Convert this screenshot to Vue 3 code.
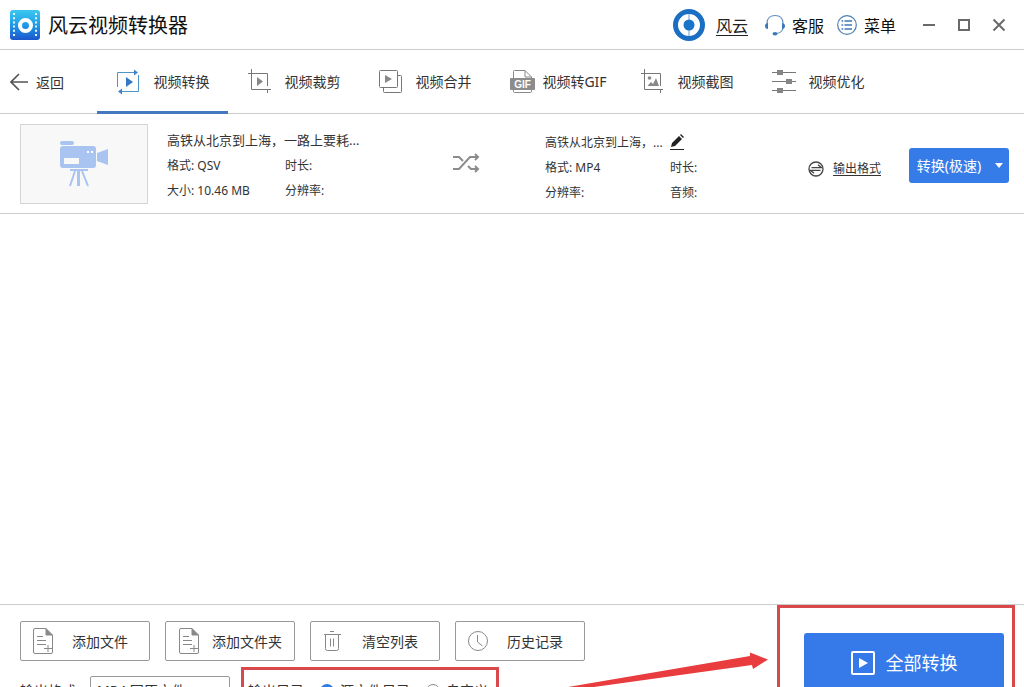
<script setup>
import { ref } from 'vue'

const tabs = [
  { id: 'convert', label: '视频转换' },
  { id: 'crop', label: '视频裁剪' },
  { id: 'merge', label: '视频合并' },
  { id: 'gif', label: '视频转GIF' },
  { id: 'shot', label: '视频截图' },
  { id: 'tune', label: '视频优化' },
]
const activeTab = ref('convert')

const actions = [
  { id: 'file', label: '添加文件' },
  { id: 'folder', label: '添加文件夹' },
  { id: 'clear', label: '清空列表' },
  { id: 'history', label: '历史记录' },
]
const format = ref('mp4')
const outputDir = ref('source')
</script>

<template>
  <div class="app">
    <header class="titlebar">
      <svg class="logo" width="30" height="30" viewBox="0 0 30 30" aria-hidden="true">
        <defs>
          <linearGradient id="logoFill" x1="0" y1="0" x2="0" y2="1">
            <stop offset="0" stop-color="#3cc9ee" />
            <stop offset="0.5" stop-color="#1f9be8" />
            <stop offset="1" stop-color="#1d55cc" />
          </linearGradient>
        </defs>
        <rect width="30" height="30" rx="3" fill="url(#logoFill)" />
        <path d="M4 3v25M26 3v25" stroke="#e8f8ff" stroke-width="2" stroke-dasharray="2 2.2" />
        <circle cx="15.5" cy="15.5" r="5.500" fill="none" stroke="#fff" stroke-width="4" />
      </svg>
      <h1>风云视频转换器</h1>

      <div class="account">
        <svg width="32" height="32" viewBox="0 0 32 32" aria-hidden="true">
          <circle cx="16" cy="16" r="13.500" fill="#fff" stroke="#1b6fc2" stroke-width="5" />
          <path d="M16 5v22" stroke="#6fa6d8" stroke-width="1" />
          <circle cx="16" cy="16" r="5.500" fill="#1b74cc" />
        </svg>
        <a href="#" class="user">风云</a>
      </div>
      <button class="tool service" type="button">
        <svg width="20" height="22" viewBox="0 0 20 22" fill="none" aria-hidden="true">
          <path d="M2 9.500C2 4 5.500 1.500 10 1.500S18 4 18 9.500M18 14c-.6 3-3 5-6.500 5.500" stroke="#5f8fc0" stroke-width="1.200" />
          <path d="M3 9v6C1.200 15 0 13.800 0 12s1.200-3 3-3zM17 9v6c1.800 0 3-1.200 3-3s-1.200-3-3-3z" fill="#3c78b8" />
          <ellipse cx="10" cy="19.700" rx="2.500" ry="1.700" fill="#3c78b8" />
        </svg>
        <span>客服</span>
      </button>
      <button class="tool" type="button">
        <svg width="20" height="20" viewBox="0 0 20 20" fill="none" aria-hidden="true">
          <circle cx="10" cy="10" r="9.300" stroke="#4c7fb4" stroke-width="1.200" />
          <path d="M7.500 6h7.500M7.500 10h7.500M7.500 14h7.500" stroke="#3c78b8" stroke-width="1.500" />
          <path d="M4.500 6h1.700M4.500 10h1.700M4.500 14h1.700" stroke="#3c78b8" stroke-width="1.700" />
        </svg>
        <span>菜单</span>
      </button>
      <div class="window">
        <button type="button" aria-label="最小化">
          <svg width="14" height="14" viewBox="0 0 14 14"><path d="M1 7h12" stroke="#6a6a6a" stroke-width="2" /></svg>
        </button>
        <button type="button" aria-label="最大化">
          <svg width="14" height="14" viewBox="0 0 14 14"><rect x="2" y="2" width="10" height="10" fill="none" stroke="#6a6a6a" stroke-width="2" /></svg>
        </button>
        <button type="button" aria-label="关闭">
          <svg width="14" height="14" viewBox="0 0 14 14"><path d="M1.500 1.500l11 11M12.500 1.500l-11 11" stroke="#6a6a6a" stroke-width="2" /></svg>
        </button>
      </div>
    </header>

    <nav class="nav">
      <button class="back" type="button">
        <svg width="18" height="18" viewBox="0 0 18 18" fill="none" stroke="#555" stroke-width="1.700" aria-hidden="true">
          <path d="M18 9H1M9 1L1 9l8 8" />
        </svg>
        <span>返回</span>
      </button>
      <button
        v-for="t in tabs"
        :key="t.id"
        type="button"
        class="tab"
        :class="{ active: t.id === activeTab }"
        @click="activeTab = t.id"
      >
        <svg v-if="t.id === 'convert'" width="25" height="26" viewBox="0 0 25 26" fill="none" aria-hidden="true">
          <path d="M.5 18V3.500H18M21.500 6v16.500H4" stroke="#4d94c8" />
          <path d="M17 .5l4 3-4 3zM5 19.500l-4 3 4 3z" fill="#3e86c8" />
          <path d="M9 8l7 5-7 5z" fill="#3579c4" />
        </svg>
        <svg v-else-if="t.id === 'crop'" width="25" height="26" viewBox="0 0 25 26" fill="none" aria-hidden="true">
          <path d="M3.500 0v20.500H23M0 4.500h19.500V17M19.500 20v4" stroke="#777" />
          <path d="M9 8l6 4.500L9 17z" fill="#888" />
        </svg>
        <svg v-else-if="t.id === 'merge'" width="25" height="26" viewBox="0 0 25 26" fill="none" aria-hidden="true">
          <rect x=".5" y="1.500" width="18" height="17" rx="1" stroke="#777" />
          <path d="M18.500 6.500h3a1 1 0 0 1 1 1v15a1 1 0 0 1-1 1h-16a1 1 0 0 1-1-1v-4" stroke="#777" />
          <path d="M6 6l7 4-7 4z" fill="#888" />
        </svg>
        <svg v-else-if="t.id === 'gif'" width="25" height="26" viewBox="0 0 25 26" fill="none" aria-hidden="true">
          <path d="M3.500 10V2.500a1 1 0 0 1 1-1H15l6.500 6.500V22.500a1 1 0 0 1-1 1h-16a1 1 0 0 1-1-1V20M15 1.500v6.500h6.500" stroke="#888" />
          <rect y="9" width="25" height="12" rx="1" fill="#8c8c8c" />
          <text x="12.500" y="19" text-anchor="middle" class="gif-text">GIF</text>
        </svg>
        <svg v-else-if="t.id === 'shot'" width="25" height="26" viewBox="0 0 25 26" fill="none" aria-hidden="true">
          <path d="M3.500 0v20.500H22M0 4.500h19.500V17M19.500 20v4" stroke="#777" />
          <circle cx="8.500" cy="9" r="1.800" fill="#888" />
          <path d="M6.500 17l3.500-4 2 2 3-6 3 8z" fill="#888" />
        </svg>
        <svg v-else width="25" height="26" viewBox="0 0 25 26" fill="none" aria-hidden="true">
          <path d="M0 3.500h24M0 12.500h24M0 21.500h24" stroke="#777" />
          <path d="M5 1h6v5H5zM14 10h6v5h-6zM5 19h6v5H5z" fill="#858585" />
        </svg>
        <span>{{ t.label }}</span>
      </button>
    </nav>

    <main class="list">
      <article class="item">
        <div class="thumb">
          <svg width="50" height="46" viewBox="0 0 50 46" fill="#a9c4f0" aria-hidden="true">
            <rect x="1" y="0" width="14" height="4" rx="2" />
            <path fill-rule="evenodd" d="M4 5h30a3 3 0 0 1 3 3v16a3 3 0 0 1-3 3H4a3 3 0 0 1-3-3V8a3 3 0 0 1 3-3zM5 17v6h15v-6z" />
            <path d="M38 12l11-4v16l-11-4z" />
            <path d="M11 28h18v2H11z" />
            <path d="M18 30h3v15h-3z" />
            <path d="M16 30L11 45M23 30l6 15" stroke="#a9c4f0" stroke-width="2" />
            <path d="M28 10h2v2h-2zM32 10h2v2h-2z" fill="#fff" />
          </svg>
        </div>
        <div class="info source">
          <strong>高铁从北京到上海，一路上要耗...</strong>
          <span>格式: QSV</span><span>时长:</span>
          <span>大小: 10.46 MB</span><span>分辨率:</span>
        </div>
        <svg class="shuffle" width="27" height="20" viewBox="0 0 27 20" fill="none" stroke="#8c8c8c" stroke-width="2" aria-hidden="true">
          <path d="M0 4h6l4 4M0 16h6L17 4h8M15 13l3 3h7" />
          <path d="M22 1l3 3-3 3M22 13l3 3-3 3" />
        </svg>
        <div class="info target">
          <span>高铁从北京到上海，...</span>
          <button class="edit" type="button" aria-label="重命名">
            <svg width="15" height="17" viewBox="0 0 15 17" aria-hidden="true">
              <path d="M1 13l1-4 7-7 3 3-7 7zM10 1l1-1 3 3-1 1z" fill="#222" />
              <path d="M0 15.500h14" stroke="#222" />
            </svg>
          </button>
          <span>格式: MP4</span><span>时长:</span>
          <span>分辨率:</span><span>音频:</span>
        </div>
        <a href="#" class="format-link">
          <svg width="16" height="16" viewBox="0 0 16 16" fill="none" stroke="#444" stroke-width="1.300" aria-hidden="true">
            <circle cx="8" cy="8" r="7" />
            <path d="M3.500 6.700h10L10 3.800M12.500 9.300h-10L6 12.200" />
          </svg>
          <span>输出格式</span>
        </a>
        <div class="split">
          <button type="button" class="go">转换(极速)</button>
          <button type="button" class="more" aria-label="更多">
            <svg width="8" height="5" viewBox="0 0 8 5"><path d="M0 0h8L4 5z" fill="#fff" /></svg>
          </button>
        </div>
      </article>
    </main>

    <footer class="footer">
      <div class="controls">
        <div class="actions">
          <button v-for="a in actions" :key="a.id" type="button" class="action">
            <svg v-if="a.id === 'file' || a.id === 'folder'" width="22" height="26" viewBox="0 0 22 26" fill="none" stroke="#888" aria-hidden="true">
              <path d="M14 .5H3a1.500 1.500 0 0 0-1.500 1.500v22A1.500 1.500 0 0 0 3 25.500h16a1.500 1.500 0 0 0 1.500-1.500V7" />
              <path d="M14 .5v6.500h6.500z" fill="#888" />
              <path d="M5 8.500h6M5 12.500h9M5 16.500h9M12 20.500h8M16 17v7" />
            </svg>
            <svg v-else-if="a.id === 'clear'" width="22" height="26" viewBox="0 0 22 26" fill="none" stroke="#888" aria-hidden="true">
              <path d="M8 3.500h4M2 6.500h17M3.500 6.500v14a2 2 0 0 0 2 2h9a2 2 0 0 0 2-2v-14M8.500 10.500v8M11.500 10.500v8" />
            </svg>
            <svg v-else width="22" height="26" viewBox="0 0 22 26" fill="none" stroke="#888" aria-hidden="true">
              <circle cx="11" cy="13" r="9.500" />
              <path d="M10.500 7v7l5 4" />
            </svg>
            <span>{{ a.label }}</span>
          </button>
        </div>
        <div class="options">
          <label for="format">输出格式:</label>
          <select id="format" v-model="format">
            <option value="mp4">MP4 同原文件</option>
          </select>
          <fieldset>
            <legend>输出目录:</legend>
            <label><input v-model="outputDir" type="radio" name="dir" value="source" />源文件目录</label>
            <label><input v-model="outputDir" type="radio" name="dir" value="custom" />自定义</label>
          </fieldset>
        </div>
      </div>
      <button type="button" class="convert-all">
        <svg width="24" height="24" viewBox="0 0 24 24" aria-hidden="true">
          <rect x="1" y="1" width="22" height="22" rx="1" fill="none" stroke="#fff" stroke-width="2" />
          <path d="M8 7l9 5-9 5z" fill="#fff" />
        </svg>
        <span>全部转换</span>
      </button>
      <div class="mark mark-dir"></div>
      <div class="mark mark-all"></div>
      <svg class="arrow" width="200" height="36" viewBox="0 0 200 36" aria-hidden="true">
        <path d="M0 36L182 5V1.500L200 8.500 185 18l-1-4L26 36z" fill="#e83c3e" />
      </svg>
    </footer>
  </div>
</template>

<style>
body {
  margin: 0;
  background: #fff;
}
</style>

<style scoped>
.app {
  display: flex;
  flex-direction: column;
  height: 100vh;
  overflow: hidden;
  background: #fff;
  color: #333;
  font-family: "Noto Sans", "Noto Sans CJK SC", sans-serif;
  font-size: 14px;
  line-height: 20px;
}
.app * {
  box-sizing: border-box;
}
button,
select {
  margin: 0;
  padding: 0;
  border: 0;
  background: none;
  color: inherit;
  font: inherit;
}
svg {
  display: block;
  flex: none;
}

.titlebar {
  display: flex;
  flex: none;
  align-items: center;
  height: 50px;
  padding: 0 8px 0 10px;
  border-bottom: 1px solid #ccc;
  color: #111;
  font-size: 16px;
}
h1 {
  margin: 0 auto 0 8px;
  padding-top: 2px;
  font-size: 20px;
  font-weight: 400;
  line-height: 30px;
}
.account,
.tool {
  display: flex;
  align-items: center;
}
.account {
  gap: 11px;
  margin-right: 17px;
}
.user {
  color: #222;
  text-underline-offset: 3px;
  text-decoration-thickness: 1px;
}
.user,
.tool span {
  padding-top: 2px;
}
.tool {
  gap: 7px;
}
.service {
  margin-right: 13px;
}
.window {
  display: flex;
  margin-left: 15px;
}
.window button {
  display: flex;
  align-items: center;
  justify-content: center;
  width: 35px;
  height: 30px;
}

.nav {
  display: flex;
  flex: none;
  height: 64px;
  border-bottom: 1px solid #ccc;
}
.back {
  display: flex;
  align-items: center;
  gap: 8px;
  width: 97px;
  padding-left: 10px;
}
.back span {
  padding-top: 2px;
}
.tab {
  display: flex;
  align-items: center;
  width: 131px;
  height: 64px;
  padding: 3px 7px 0 20px;
  border-bottom: 3px solid transparent;
  white-space: nowrap;
}
.tab span {
  flex: 1;
  text-align: center;
}
.tab.active {
  border-bottom-color: #4378c0;
}
.gif-text {
  fill: #fff;
  font: 700 10px "Liberation Sans", sans-serif;
}

.list {
  flex: 1;
  min-height: 0;
}
.item {
  display: grid;
  grid-template-columns: 128px minmax(0, 305fr) 92px minmax(0, 263fr) auto auto;
  align-items: start;
  height: 100px;
  padding: 10px 15px 0 20px;
  border-bottom: 1px solid #ccc;
  font-size: 12px;
}
.thumb {
  display: flex;
  align-items: center;
  justify-content: center;
  height: 80px;
  border: 1px solid #d4d4d4;
  background: #f8f8f9;
}
.info {
  display: grid;
  grid-auto-rows: 25px;
  line-height: 25px;
  white-space: nowrap;
}
.source {
  grid-template-columns: 118px auto;
  padding: 4px 0 0 19px;
}
.source strong {
  grid-column: 1 / 3;
  overflow: hidden;
  font-size: 13px;
  font-weight: 400;
  text-overflow: ellipsis;
}
.target {
  grid-template-columns: 125px auto;
  padding-top: 6px;
}
.edit {
  display: flex;
  align-items: center;
}
.shuffle {
  margin-top: 29px;
}
.format-link {
  display: flex;
  align-items: center;
  gap: 9px;
  margin: 35px 28px 0 0;
  color: #333;
  text-underline-offset: 2px;
}
.split {
  display: flex;
  height: 35px;
  margin-top: 24px;
  border-radius: 3px;
  background: #367ce8;
  color: #fff;
  font-size: 14px;
}
.go {
  width: 80px;
}
.more {
  display: flex;
  align-items: center;
  justify-content: center;
  width: 20px;
}

.footer {
  position: relative;
  display: flex;
  flex: none;
  align-items: flex-start;
  justify-content: space-between;
  height: 83px;
  padding: 16px 20px 0;
  overflow: hidden;
  border-top: 1px solid #ccc;
}
.actions {
  display: flex;
  gap: 15px;
}
.action {
  display: flex;
  align-items: center;
  width: 130px;
  height: 40px;
  padding: 0 3px 0 11px;
  border: 1px solid #999;
  border-radius: 2px;
  white-space: nowrap;
}
.action span {
  flex: 1;
  padding-top: 2px;
  text-align: center;
}
.action:nth-child(2) {
  padding-left: 12px;
  padding-right: 0;
}
.options {
  display: flex;
  align-items: center;
  height: 28px;
  margin-top: 15px;
  white-space: nowrap;
}
.options > label {
  width: 70px;
  padding-top: 2px;
}
select {
  width: 140px;
  height: 28px;
  padding: 2px 0 0 6px;
  border: 1px solid #999;
  border-radius: 2px;
  appearance: none;
}
fieldset {
  display: flex;
  align-items: center;
  gap: 16px;
  margin: 0 0 0 18px;
  padding: 2px 0 0;
  border: 0;
}
legend {
  float: left;
  width: 56px;
  padding: 0;
}
fieldset label {
  display: flex;
  align-items: center;
  gap: 6px;
}
input {
  width: 14px;
  height: 14px;
  margin: 0;
  border: 1px solid #888;
  border-radius: 50%;
  appearance: none;
}
input:checked {
  border: 4px solid #2f7be5;
}
.convert-all {
  display: flex;
  align-items: center;
  justify-content: center;
  gap: 11px;
  width: 200px;
  height: 60px;
  margin-top: 12px;
  border-radius: 3px;
  background: #357ae8;
  color: #fff;
  font-size: 18px;
}
.mark {
  position: absolute;
  border: 3px solid #d9484a;
  border-bottom: 0;
  pointer-events: none;
}
.mark-dir {
  top: 62px;
  bottom: 0;
  left: 241px;
  width: 258px;
}
.mark-all {
  top: 0;
  right: 9px;
  bottom: 0;
  width: 238px;
}
.arrow {
  position: absolute;
  right: 256px;
  bottom: 0;
  pointer-events: none;
}
</style>
